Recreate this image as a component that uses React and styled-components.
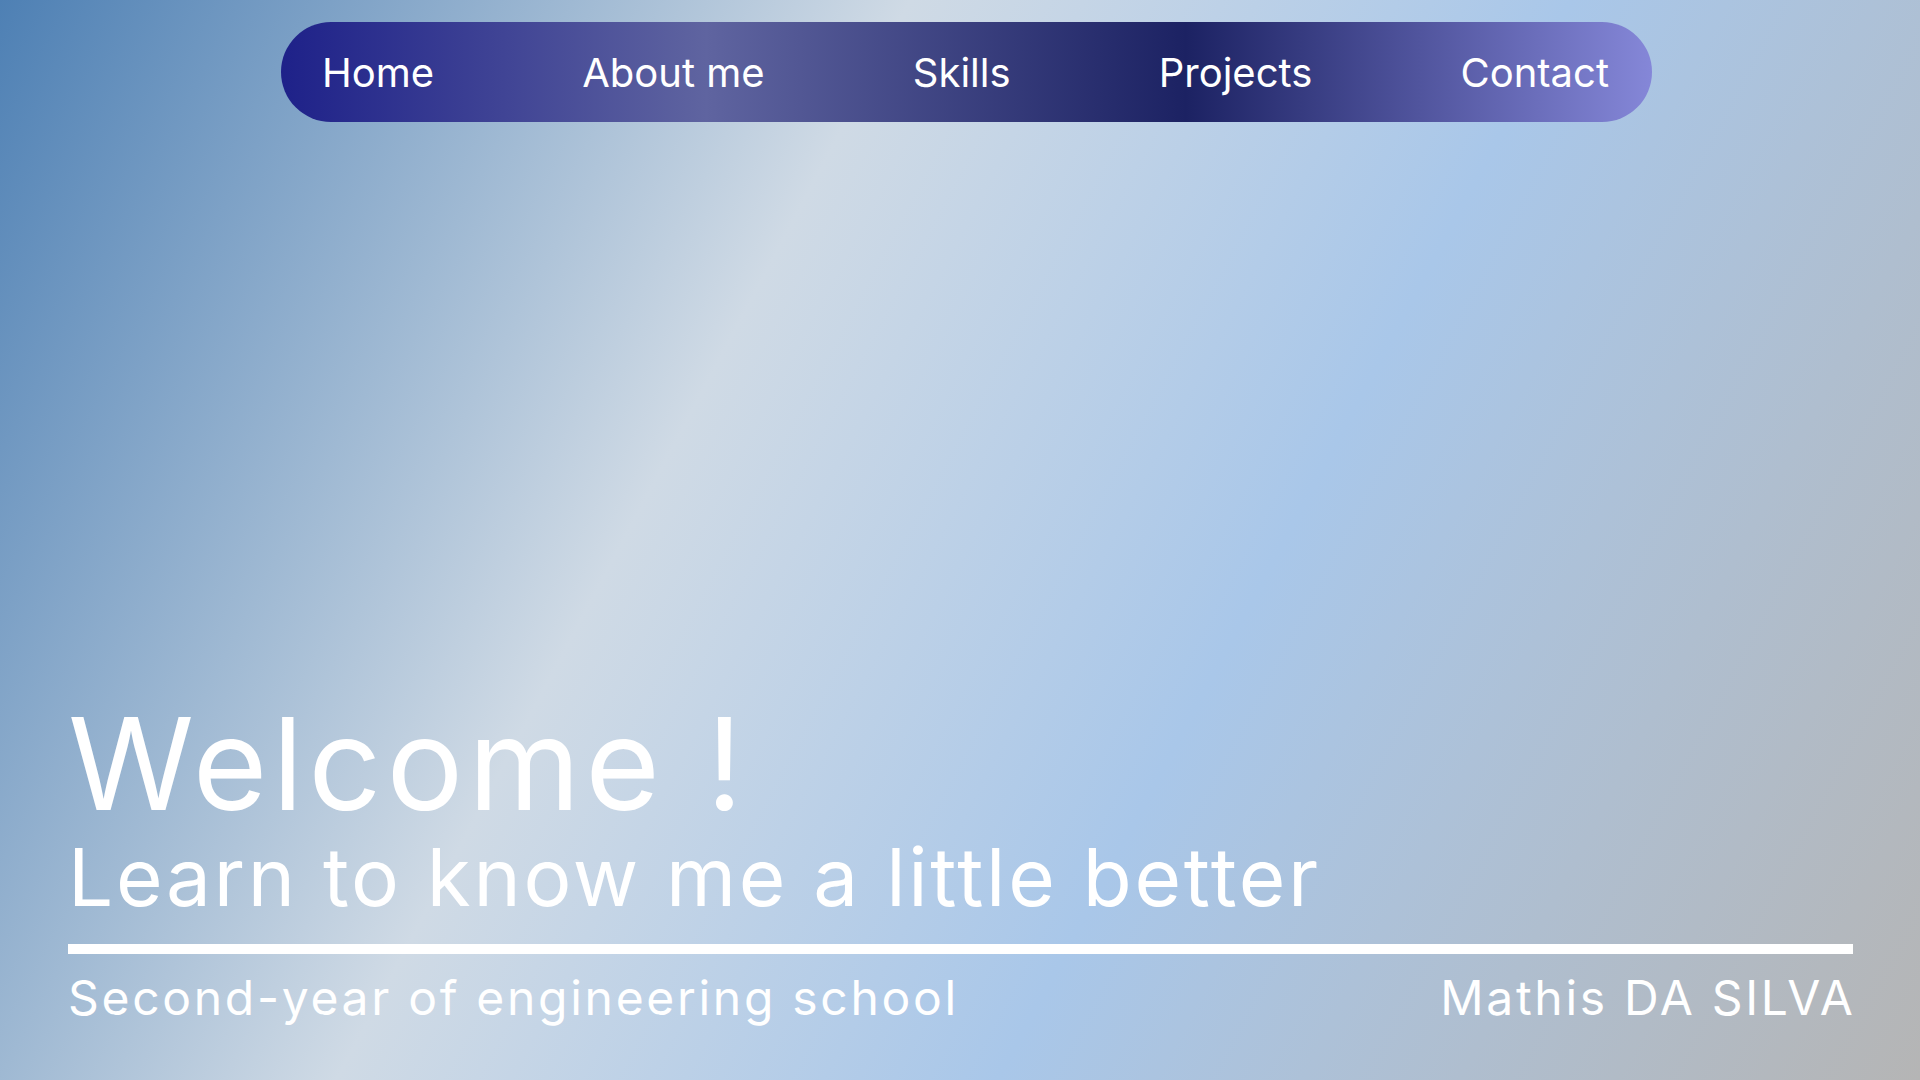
import React from 'react';
import styled, { createGlobalStyle } from 'styled-components';

const GlobalStyle = createGlobalStyle`
    * {
        box-sizing: border-box;
    }
    html, body {
        margin: 0;
        padding: 0;
    }
    body {
        font-family: Inter, 'Noto Sans', sans-serif;
        color: #fff;
    }
`;

const links = ['Home', 'About me', 'Skills', 'Projects', 'Contact'];

const App = () => {
    return (
        <>
            <GlobalStyle />
            <Page>
                <Header>
                    <Nav>
                        {links.map((label) => (
                            <NavLink key={label} href="#">
                                {label}
                            </NavLink>
                        ))}
                    </Nav>
                </Header>
                <Hero>
                    <Title>Welcome !</Title>
                    <Subtitle>Learn to know me a little better</Subtitle>
                    <Divider />
                    <Footer>
                        <Caption>Second-year of engineering school</Caption>
                        <Caption>Mathis DA SILVA</Caption>
                    </Footer>
                </Hero>
            </Page>
        </>
    );
};

export default App;

const Page = styled.main`
    height: 100vh;
    min-height: 1080px;
    display: flex;
    flex-direction: column;
    padding: 22px 67px 58px 68px;
    background: linear-gradient(
        118deg,
        #4e80b4 0%,
        #9fb9d3 23%,
        #cfdae5 36.5%,
        #a9c7e9 63%,
        #b5b5b5 100%
    );
    overflow: hidden;
`;

const Header = styled.header`
    display: flex;
    padding-left: 213px;
`;

const Nav = styled.nav`
    width: 1371px;
    height: 100px;
    display: flex;
    align-items: center;
    justify-content: space-between;
    padding: 0 43px 0 41px;
    border-radius: 50px;
    background: linear-gradient(90deg, #1e2189 0%, #5f64a0 31%, #1c2263 66%, #8587d8 100%);
`;

const NavLink = styled.a`
    font-family: Inter, sans-serif;
    font-size: 40px;
    font-weight: 400;
    color: #fff;
    text-decoration: none;
    line-height: normal;
`;

const Hero = styled.section`
    margin-top: auto;
    display: flex;
    flex-direction: column;
`;

const Title = styled.h1`
    margin: 0;
    font-family: Inter, sans-serif;
    font-size: 128px;
    font-weight: 400;
    line-height: 1;
    letter-spacing: 5px;
`;

const Subtitle = styled.h2`
    margin: 9px 0 0;
    font-family: Inter, sans-serif;
    font-size: 80px;
    font-weight: 400;
    line-height: 1;
    letter-spacing: 2.7px;
`;

const Divider = styled.hr`
    margin: 27px 0 0;
    border: 0;
    height: 10px;
    background: #fff;
`;

const Footer = styled.div`
    margin-top: 20px;
    display: flex;
    justify-content: space-between;
    align-items: baseline;
`;

const Caption = styled.p`
    margin: 0;
    font-family: Inter, sans-serif;
    font-size: 48px;
    font-weight: 400;
    line-height: 1;
    letter-spacing: 2.7px;

    &:last-child {
        margin-right: -2.7px;
    }
`;
